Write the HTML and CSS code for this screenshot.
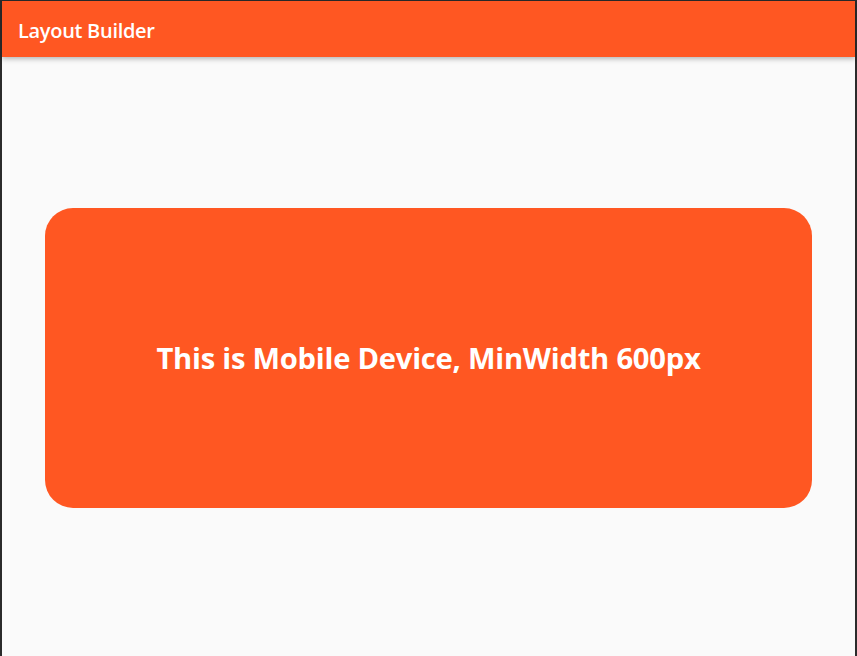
FILE: index.html
```html
<!DOCTYPE html>
<html>
<head>
<meta charset="utf-8">
<link rel="stylesheet" href="styles.css">
</head>
<body>
<div class="window">
  <header class="appbar"><span class="title">Layout Builder</span></header>
  <main class="content">
    <div class="card"><span class="card-text">This is Mobile Device, MinWidth 600px</span></div>
  </main>
</div>
</body>
</html>
```
FILE: styles.css
```css
html, body { margin: 0; padding: 0; height: 100%; }
body {
  background: #2b2b2b;
  padding: 1px 2px 0 2px;
  box-sizing: border-box;
  font-family: "Open Sans", "Noto Sans", sans-serif;
}
.window {
  height: 100%;
  background: #fafafa;
  display: flex;
  flex-direction: column;
}
.appbar {
  height: 56px;
  flex: none;
  background: #ff5722;
  display: flex;
  align-items: center;
  padding-left: 16px;
  box-shadow: 0 2px 5px rgba(0,0,0,0.28);
  position: relative;
  z-index: 1;
}
.title {
  color: #fff;
  font-size: 20px;
  font-weight: 600;
  letter-spacing: -0.3px;
  margin-top: 2px;
}
.content {
  flex: 1;
  display: flex;
  align-items: center;
  justify-content: center;
}
.card {
  width: 767px;
  height: 300px;
  margin-top: 2px;
  background: #ff5722;
  border-radius: 28px;
  display: flex;
  align-items: center;
  justify-content: center;
}
.card-text {
  color: #fff;
  font-size: 29.2px;
  font-weight: 700;
  letter-spacing: -0.25px;
  margin-top: 1px;
}
```
